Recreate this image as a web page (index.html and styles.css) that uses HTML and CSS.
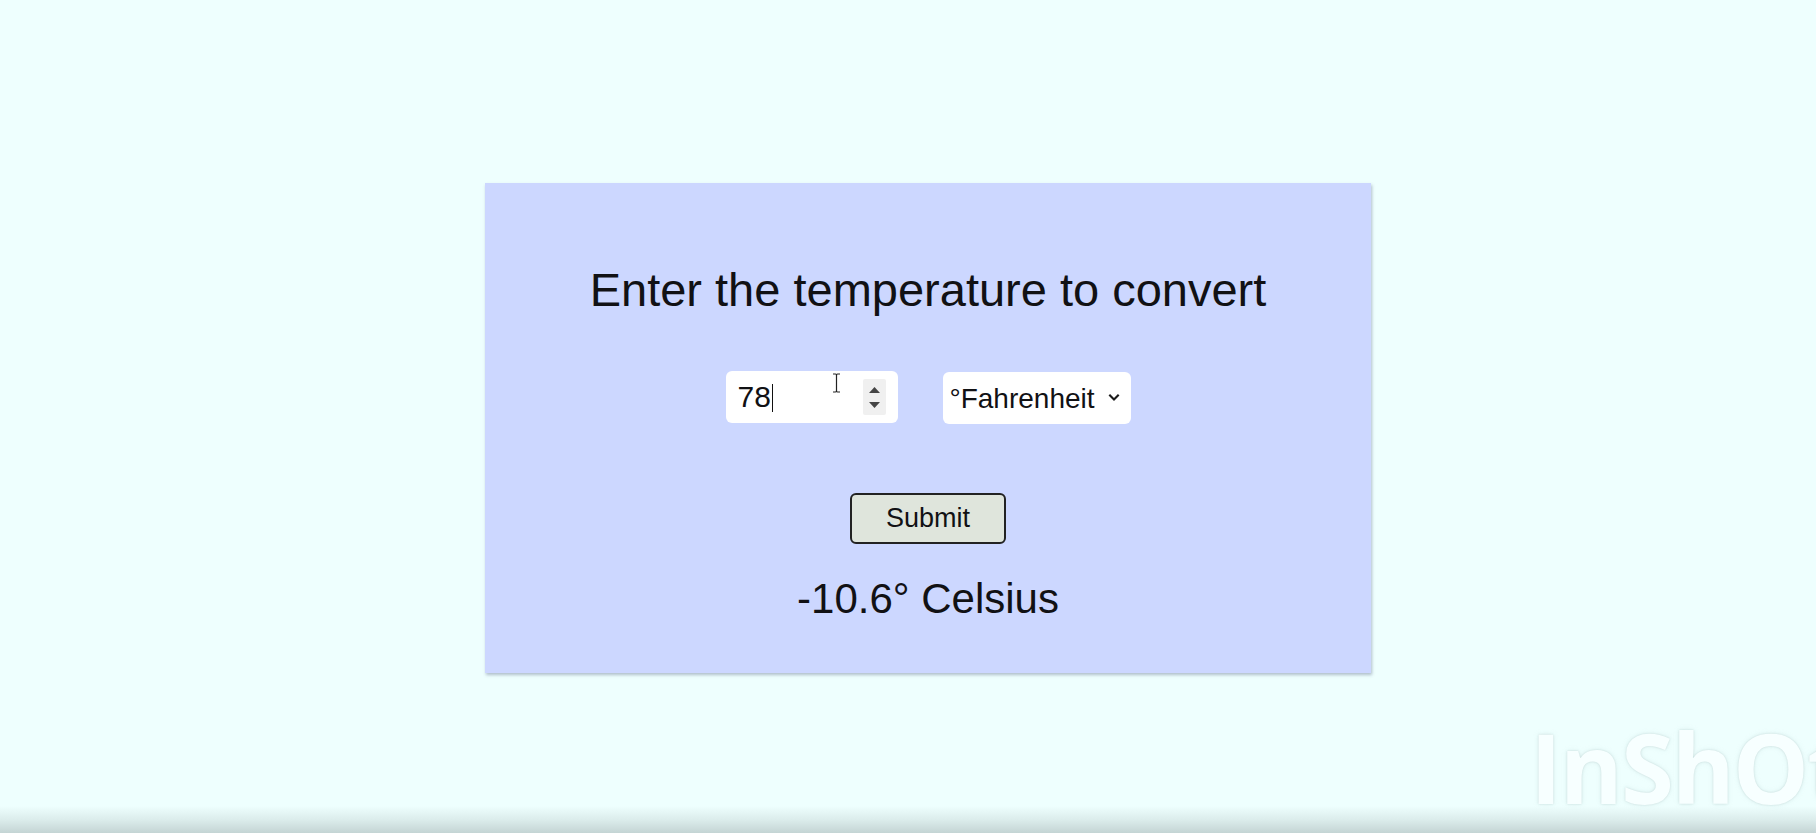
FILE: index.html
```html
<!DOCTYPE html>
<html lang="en">
<head>
<meta charset="utf-8">
<title>Temperature Converter</title>
<link rel="stylesheet" href="styles.css">
</head>
<body>
  <main class="card">
    <h1 class="title">Enter the temperature to convert</h1>
    <div class="row">
      <div class="num-field">
        <input class="num-input" type="text" value="78" aria-label="Temperature">
        <span class="caret"></span>
        <svg class="ibeam" width="9" height="20" viewBox="0 0 9 20">
          <path d="M1 1 H3.5 Q4.5 1 4.5 2.5 V17.5 Q4.5 19 3.5 19 H1 M8 1 H5.5 Q4.5 1 4.5 2.5 M4.5 17.5 Q4.5 19 5.5 19 H8" fill="none" stroke="#222" stroke-width="1.2"/>
        </svg>
        <div class="spinner">
          <svg width="23" height="36" viewBox="0 0 23 36">
            <path d="M6 14 L11.5 8 L17 14 Z" fill="#454545"/>
            <path d="M6 23 L11.5 29 L17 23 Z" fill="#454545"/>
          </svg>
        </div>
      </div>
      <div class="select-wrap">
        <select class="unit-select" aria-label="Unit">
          <option>°Fahrenheit</option>
          <option>°Celsius</option>
        </select>
        <svg class="chevron" width="12" height="9" viewBox="0 0 12 9">
          <path d="M1.3 1.8 L6 6.5 L10.7 1.8" fill="none" stroke="#1a1a1a" stroke-width="2.1"/>
        </svg>
      </div>
    </div>
    <button class="submit" type="button">Submit</button>
    <p class="result">-10.6° Celsius</p>
  </main>
  <div class="watermark">InShOt</div>
</body>
</html>
```

FILE: styles.css
```css
html, body {
  margin: 0;
  height: 100%;
}

body {
  position: relative;
  overflow: hidden;
  font-family: "Liberation Sans", Arial, sans-serif;
  color: #111114;
  background: linear-gradient(to bottom, #eefffe 0, #eefffe 806px, #dbeceb 820px, #c4d4d4 833px);
}

.card {
  width: 886px;
  box-sizing: border-box;
  margin: 183px 0 0 485px;
  padding: 80px 0 50px;
  background: #ccd7ff;
  box-shadow: 1px 2px 3px rgba(60, 70, 110, 0.35);
  display: flex;
  flex-direction: column;
  align-items: center;
}

.title {
  margin: 0;
  font-size: 47px;
  font-weight: normal;
  line-height: 54px;
  white-space: nowrap;
}

.row {
  margin-top: 54px;
  display: flex;
  align-items: flex-start;
  gap: 45px;
}

.num-field {
  position: relative;
  width: 172px;
  height: 52px;
  box-sizing: border-box;
  padding-left: 12px;
  background: #ffffff;
  border-radius: 6px;
  display: flex;
  align-items: center;
}

.num-input {
  border: none;
  outline: none;
  background: transparent;
  padding: 0;
  width: 90px;
  font-family: "Liberation Sans", Arial, sans-serif;
  font-size: 30px;
  color: #111114;
}

.caret {
  position: absolute;
  left: 46px;
  top: 13px;
  width: 1.5px;
  height: 28px;
  background: #111;
}

.ibeam {
  position: absolute;
  left: 106px;
  top: 2px;
}

.spinner {
  position: absolute;
  right: 12px;
  top: 8px;
  width: 23px;
  height: 36px;
  background: #f0f0f0;
  border-radius: 2px;
}

.spinner svg {
  display: block;
}

.select-wrap {
  position: relative;
  width: 188px;
  height: 52px;
  margin-top: 1px;
  background: #ffffff;
  border-radius: 6px;
}

.unit-select {
  appearance: none;
  -webkit-appearance: none;
  border: none;
  outline: none;
  background: transparent;
  width: 100%;
  height: 100%;
  padding: 0 0 0 7px;
  font-family: "Liberation Sans", Arial, sans-serif;
  font-size: 28px;
  color: #111114;
}

.chevron {
  position: absolute;
  left: 165px;
  top: 21px;
}

.submit {
  margin-top: 69px;
  width: 156px;
  height: 51px;
  box-sizing: border-box;
  border: 2px solid #222222;
  border-radius: 6px;
  background: #dfe5dc;
  font-family: "Liberation Sans", Arial, sans-serif;
  font-size: 27px;
  color: #111114;
  padding: 0;
}

.result {
  margin: 31px 0 0;
  font-size: 42px;
  line-height: 48px;
  white-space: nowrap;
}

.watermark {
  position: absolute;
  left: 1530px;
  top: 712px;
  font-family: "Open Sans", sans-serif;
  font-weight: 700;
  font-size: 96px;
  line-height: 110px;
  letter-spacing: -2px;
  color: #f7ffff;
  text-shadow: 0 0 2px rgba(170, 195, 195, 0.55), 0 0 5px rgba(190, 210, 210, 0.35);
  white-space: nowrap;
}
```
